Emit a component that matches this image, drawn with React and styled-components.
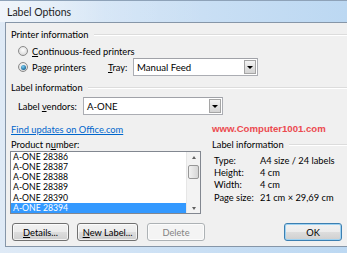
import React from "react"
import styled, { createGlobalStyle } from "styled-components"

const GlobalStyle = createGlobalStyle`
  html, body {
    margin: 0;
    padding: 0;
    background: #d3e3f3;
  }
  body {
    font-family: Lato, "Noto Sans", sans-serif;
    font-size: 9.3px;
    color: #000;
  }
`

const Window = styled.div`
  width: 347px;
  height: 253px;
  overflow: hidden;
  display: flex;
  flex-direction: column;
  background: linear-gradient(to right, #dfeaf6, #cfe2f5 40%, #bcd8f2);
  border-top: 1px solid #8ea2b8;
  box-sizing: border-box;
`

const TitleBar = styled.div`
  height: 21px;
  display: flex;
  align-items: center;
  padding-left: 7px;
  font-size: 10.5px;
  color: #1e1e1e;
  background: linear-gradient(to right, rgba(255, 255, 255, 0.55), rgba(255, 255, 255, 0.1) 30%, rgba(255, 255, 255, 0) 60%);
`

const Client = styled.div`
  flex: 1;
  margin: 0 0 6px 5px;
  background: #f0f0f0;
  border: 1px solid #8696a8;
  border-right: none;
  display: flex;
  flex-direction: column;
  padding: 5px 0 0 0;
`

const GroupHeader = styled.div`
  display: flex;
  align-items: center;
  height: 13px;
  margin-top: ${p => p.$top || 0}px;
  padding-left: ${p => p.$left || 0}px;
  white-space: nowrap;

  &::after {
    content: "";
    flex: 1;
    margin-left: 5px;
    border-top: 1px solid #dcdcdc;
    border-bottom: 1px solid #ffffff;
  }
`

const Row = styled.div`
  display: flex;
  align-items: center;
  height: ${p => p.$height || 14}px;
  margin-top: ${p => p.$top || 0}px;
  padding-left: ${p => p.$left || 0}px;
  white-space: nowrap;
`

const Radio = styled.span`
  width: 10px;
  height: 10px;
  border-radius: 50%;
  border: 1px solid #8a8a8a;
  background: radial-gradient(circle at 50% 40%, #ffffff, #e2e2e2 60%, #cfcfcf);
  box-sizing: border-box;
  margin-right: 4px;
  display: flex;
  align-items: center;
  justify-content: center;

  &::after {
    content: "";
    display: ${p => (p.$checked ? "block" : "none")};
    width: 5px;
    height: 5px;
    border-radius: 50%;
    background: radial-gradient(circle at 40% 35%, #7fd0f3, #1b6a9c 70%, #0d3c5e);
  }
`

const Label = styled.span`
  width: ${p => (p.$width ? `${p.$width}px` : "auto")};
`

const Select = styled.div`
  display: flex;
  align-items: center;
  width: ${p => p.$width}px;
  height: 18px;
  box-sizing: border-box;
  background: #fff;
  border: 1px solid #abadb3;
  border-top-color: #a0a2a8;
  padding-left: 3px;
`

const SelectText = styled.span`
  flex: 1;
  font-size: 9.6px;
`

const DropButton = styled.span`
  width: 12px;
  height: 14px;
  margin-right: 1px;
  box-sizing: border-box;
  border: 1px solid #a5a5a5;
  background: linear-gradient(#f4f4f4, #e2e2e2 50%, #d4d4d4);
  display: flex;
  align-items: center;
  justify-content: center;

  &::after {
    content: "";
    border-left: 3px solid transparent;
    border-right: 3px solid transparent;
    border-top: 3px solid #000;
  }
`

const Columns = styled.div`
  display: flex;
  margin-top: 8px;
`

const LeftColumn = styled.div`
  width: 205px;
  display: flex;
  flex-direction: column;
  padding-left: 4px;
  box-sizing: border-box;
  flex-shrink: 0;
`

const RightColumn = styled.div`
  flex: 1;
  display: flex;
  flex-direction: column;
  padding-left: 1px;
`

const Link = styled.a`
  color: #0066cc;
  text-decoration: underline;
  height: 13px;
  line-height: 13px;
  padding-left: 1px;
  white-space: nowrap;
`

const Watermark = styled.div`
  color: #ec4a4f;
  font-weight: bold;
  font-family: "Liberation Sans", Arial, sans-serif;
  font-size: 9.6px;
  height: 12px;
  line-height: 12px;
  white-space: nowrap;
`

const PlainLabel = styled.div`
  height: 13px;
  line-height: 13px;
  margin-top: 2px;
  padding-left: 1px;
`

const ListBox = styled.div`
  width: 191px;
  height: 63px;
  box-sizing: border-box;
  border: 1px solid #828790;
  background: #fff;
  display: flex;
`

const Items = styled.div`
  flex: 1;
  display: flex;
  flex-direction: column;
  justify-content: flex-end;
  overflow: hidden;
`

const Item = styled.div`
  height: 10.2px;
  line-height: 10.2px;
  font-size: 8.7px;
  padding-left: 2px;
  white-space: nowrap;
  background: ${p => (p.$selected ? "#3399ff" : "transparent")};
  color: ${p => (p.$selected ? "#fff" : "#000")};
`

const ScrollBar = styled.div`
  width: 13px;
  background: #f3f3f3;
  border-left: 1px solid #e6e6e6;
  display: flex;
  flex-direction: column;
  align-items: center;
`

const Arrow = styled.span`
  height: 10px;
  display: flex;
  align-items: center;
  justify-content: center;

  &::after {
    content: "";
    border-left: 2.5px solid transparent;
    border-right: 2.5px solid transparent;
    ${p => (p.$up ? "border-bottom: 3px solid #606060;" : "border-top: 3px solid #606060;")}
  }
`

const Thumb = styled.span`
  width: 11px;
  height: 14px;
  margin-top: 3px;
  box-sizing: border-box;
  border: 1px solid #979797;
  border-radius: 2px;
  background: linear-gradient(to right, #f2f2f2, #e4e4e4 50%, #d6d6d6);
`

const Track = styled.span`
  flex: 1;
`

const InfoTable = styled.div`
  display: grid;
  grid-template-columns: 46px auto;
  grid-auto-rows: 12.4px;
  align-items: center;
  padding-left: 2px;
  margin-top: 3px;
  white-space: nowrap;
`

const ButtonRow = styled.div`
  display: flex;
  align-items: center;
  margin-top: 9px;
  padding-left: 6px;
`

const Button = styled.div`
  width: ${p => p.$width}px;
  height: 18px;
  box-sizing: border-box;
  margin-left: ${p => p.$left || 0}px;
  border: 1px solid ${p => (p.$default ? "#3c7fb1" : p.$disabled ? "#adb2b5" : "#707070")};
  border-radius: 3px;
  background: ${p =>
    p.$disabled
      ? "#f4f4f4"
      : "linear-gradient(#f2f2f2, #ebebeb 50%, #dddddd 51%, #cfcfcf)"};
  box-shadow: ${p => (p.$default ? "inset 0 0 0 1px #9ed2f2" : "inset 0 0 0 1px rgba(255,255,255,0.7)")};
  color: ${p => (p.$disabled ? "#838383" : "#000")};
  display: flex;
  align-items: center;
  justify-content: center;
  white-space: nowrap;
`

const BottomSpacer = styled.div`
  flex: 1;
`

const U = styled.span`
  text-decoration: underline;
`

const products = ["28386", "28387", "28388", "28389", "28390", "28394"]

const info = [
  ["Type:", "A4 size / 24 labels"],
  ["Height:", "4 cm"],
  ["Width:", "4 cm"],
  ["Page size:", "21 cm \u00d7 29,69 cm"],
]

export default function App() {
  return (
    <>
      <GlobalStyle />
      <Window>
        <TitleBar>Label Options</TitleBar>
        <Client>
          <GroupHeader $left={5}>Printer information</GroupHeader>
          <Row $top={3} $left={12}>
            <Radio />
            <span>
              <U>C</U>ontinuous-feed printers
            </span>
          </Row>
          <Row $top={0} $height={18} $left={12}>
            <Radio $checked />
            <Label $width={76}>
              Pa<U>g</U>e printers
            </Label>
            <Label $width={25}>
              <U>T</U>ray:
            </Label>
            <Select $width={125}>
              <SelectText>Manual Feed</SelectText>
              <DropButton />
            </Select>
          </Row>
          <GroupHeader $top={5} $left={5}>Label information</GroupHeader>
          <Row $top={3} $height={18} $left={12}>
            <Label $width={65}>
              Label <U>v</U>endors:
            </Label>
            <Select $width={140}>
              <SelectText>A-ONE</SelectText>
              <DropButton />
            </Select>
          </Row>
          <Columns>
            <LeftColumn>
              <Link>Find updates on Office.com</Link>
              <PlainLabel>
                Product n<U>u</U>mber:
              </PlainLabel>
              <ListBox>
                <Items>
                  {products.map((p, i) => (
                    <Item key={p} $selected={i === products.length - 1}>
                      A-ONE {p}
                    </Item>
                  ))}
                </Items>
                <ScrollBar>
                  <Arrow $up />
                  <Thumb />
                  <Track />
                  <Arrow />
                </ScrollBar>
              </ListBox>
            </LeftColumn>
            <RightColumn>
              <Watermark>www.Computer1001.com</Watermark>
              <GroupHeader $top={3}>Label information</GroupHeader>
              <InfoTable>
                {info.map(([k, v]) => (
                  <React.Fragment key={k}>
                    <span>{k}</span>
                    <span>{v}</span>
                  </React.Fragment>
                ))}
              </InfoTable>
            </RightColumn>
          </Columns>
          <ButtonRow>
            <Button $width={57}>
              <U>D</U>etails...
            </Button>
            <Button $width={61} $left={8}>
              <U>N</U>ew Label...
            </Button>
            <Button $width={58} $left={9} $disabled>
              Delete
            </Button>
            <Button $width={58} $left={79} $default>
              OK
            </Button>
          </ButtonRow>
          <BottomSpacer />
        </Client>
      </Window>
    </>
  )
}
